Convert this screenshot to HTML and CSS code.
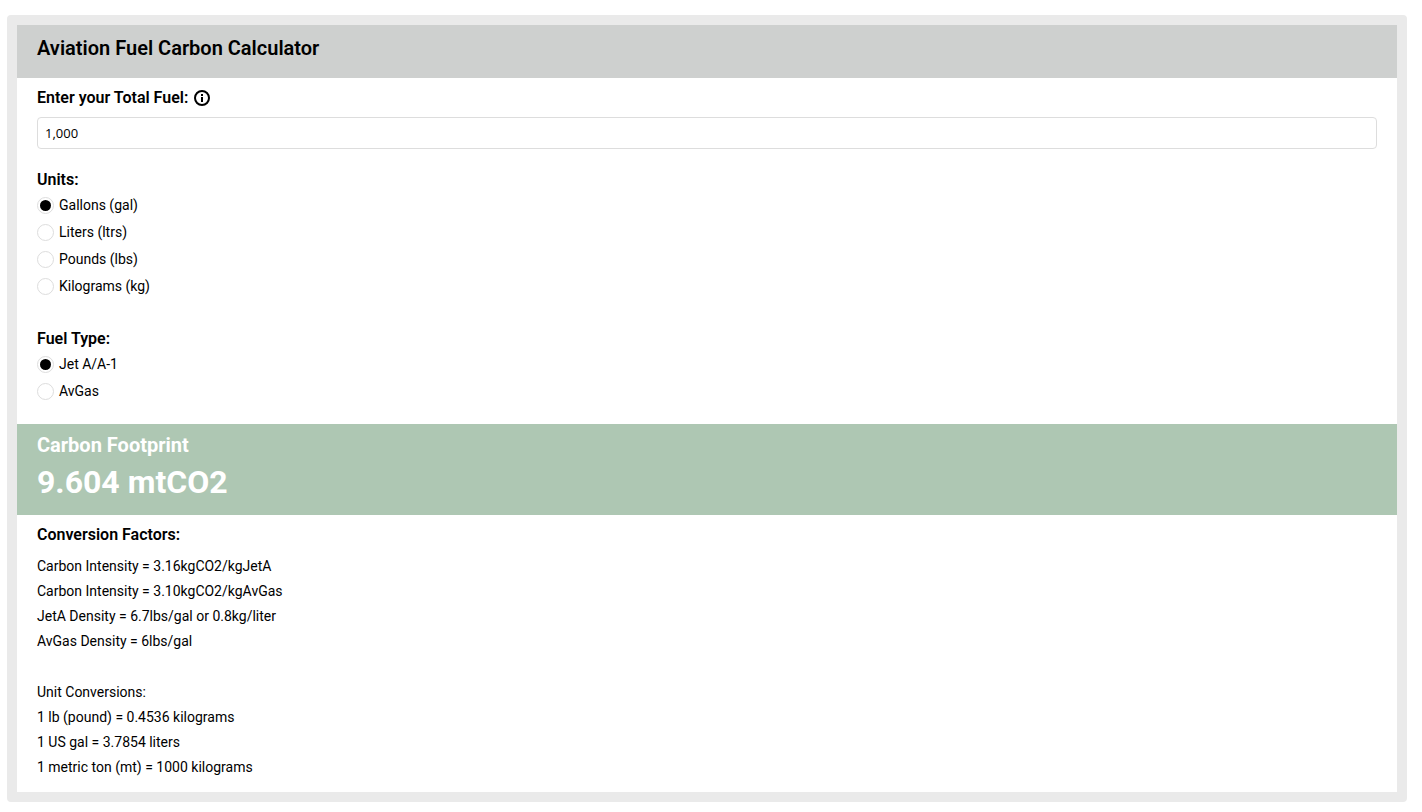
FILE: index.html
```html
<!DOCTYPE html>
<html lang="en">
<head>
  <meta charset="UTF-8" />
  <meta name="viewport" content="width=device-width, initial-scale=1.0" />
  <title>Aviation Fuel Carbon Calculator</title>
  <link rel="stylesheet" href="styles.css">
</head>
<body>
  <form class="calculator">
    <header class="calc-header">
      <h1>Aviation Fuel Carbon Calculator</h1>
    </header>

    <div class="calc-body">
      <div class="field">
        <div class="field-title">
          <label for="totalFuel">Enter your Total Fuel:</label>
          <svg class="info-icon" viewBox="0 0 16 16" aria-hidden="true">
            <circle cx="8" cy="8" r="7" fill="none" stroke="#000" stroke-width="2" />
            <path d="M7 4h2v2h-2zM7 7h2v5h-2z" />
          </svg>
        </div>
        <input type="text" class="fuel-input" id="totalFuel" value="1,000" />
      </div>

      <fieldset class="options">
        <legend>Units:</legend>
        <label class="option"><input type="radio" name="units" value="gal" checked /> Gallons (gal)</label>
        <label class="option"><input type="radio" name="units" value="ltrs" /> Liters (ltrs)</label>
        <label class="option"><input type="radio" name="units" value="lbs" /> Pounds (lbs)</label>
        <label class="option"><input type="radio" name="units" value="kg" /> Kilograms (kg)</label>
      </fieldset>

      <fieldset class="options">
        <legend>Fuel Type:</legend>
        <label class="option"><input type="radio" name="fuelType" value="jet" checked /> Jet A/A-1</label>
        <label class="option"><input type="radio" name="fuelType" value="avgas" /> AvGas</label>
      </fieldset>
    </div>

    <section class="result">
      <h2>Carbon Footprint</h2>
      <output class="result-value" for="totalFuel">9.604 mtCO2</output>
    </section>

    <section class="factors">
      <h3>Conversion Factors:</h3>
      <p>
        Carbon Intensity = 3.16kgCO2/kgJetA<br>
        Carbon Intensity = 3.10kgCO2/kgAvGas<br>
        JetA Density = 6.7lbs/gal or 0.8kg/liter<br>
        AvGas Density = 6lbs/gal
      </p>
      <p>
        Unit Conversions:<br>
        1 lb (pound) = 0.4536 kilograms<br>
        1 US gal = 3.7854 liters<br>
        1 metric ton (mt) = 1000 kilograms
      </p>
    </section>
  </form>
</body>
</html>
```
FILE: styles.css
```css
* {
  margin: 0;
  padding: 0;
  box-sizing: border-box;
}
body {
  background-color: #fff;
  color: #000;
  padding: 15px 15px 10px 7px;
  font-family: Roboto, sans-serif;
  font-size: 14px;
}
.calculator {
  border: 10px solid #eaeaea;
  border-radius: 4px;
}
.calc-header {
  background: #ced0cf;
  padding: 11px 20px 18px;
}
.calc-header h1 {
  font-size: 20px;
  font-weight: 600;
  line-height: 24px;
}
.calc-body {
  padding: 8px 20px 19px;
  display: flex;
  flex-direction: column;
  gap: 19px;
}
.field-title {
  display: flex;
  align-items: center;
  gap: 6px;
  margin-bottom: 7px;
  font-size: 16px;
  font-weight: 600;
  line-height: 24px;
}
.info-icon {
  width: 16px;
  height: 16px;
}
.fuel-input {
  display: block;
  width: 100%;
  height: 32px;
  padding: 0 7px;
  border: 1px solid #ddd;
  border-radius: 4px;
  font-family: "Open Sans", sans-serif;
  font-size: 13px;
}
.options {
  border: none;
}
.options + .options {
  margin-top: 8px;
}
.options legend {
  font-size: 16px;
  font-weight: 600;
  line-height: 24px;
}
.option {
  display: flex;
  align-items: center;
  gap: 5px;
  line-height: 27px;
}
.option input {
  appearance: none;
  width: 17px;
  height: 17px;
  border: 1px solid #ddd;
  border-radius: 50%;
}
.option input:checked {
  padding: 2px;
  background: #000 content-box;
}
.result {
  background: #aec7b3;
  color: #fff;
  padding: 9px 20px 11px;
}
.result h2 {
  font-size: 20px;
  font-weight: 700;
  line-height: 24px;
  margin-bottom: 3px;
}
.result-value {
  display: block;
  font-size: 32px;
  font-weight: 700;
  line-height: 44px;
}
.factors {
  padding: 8px 20px 12px;
  line-height: 25px;
}
.factors h3 {
  font-size: 16px;
  font-weight: 600;
  line-height: 24px;
  margin-bottom: 7px;
}
.factors p + p {
  margin-top: 26px;
}
```
